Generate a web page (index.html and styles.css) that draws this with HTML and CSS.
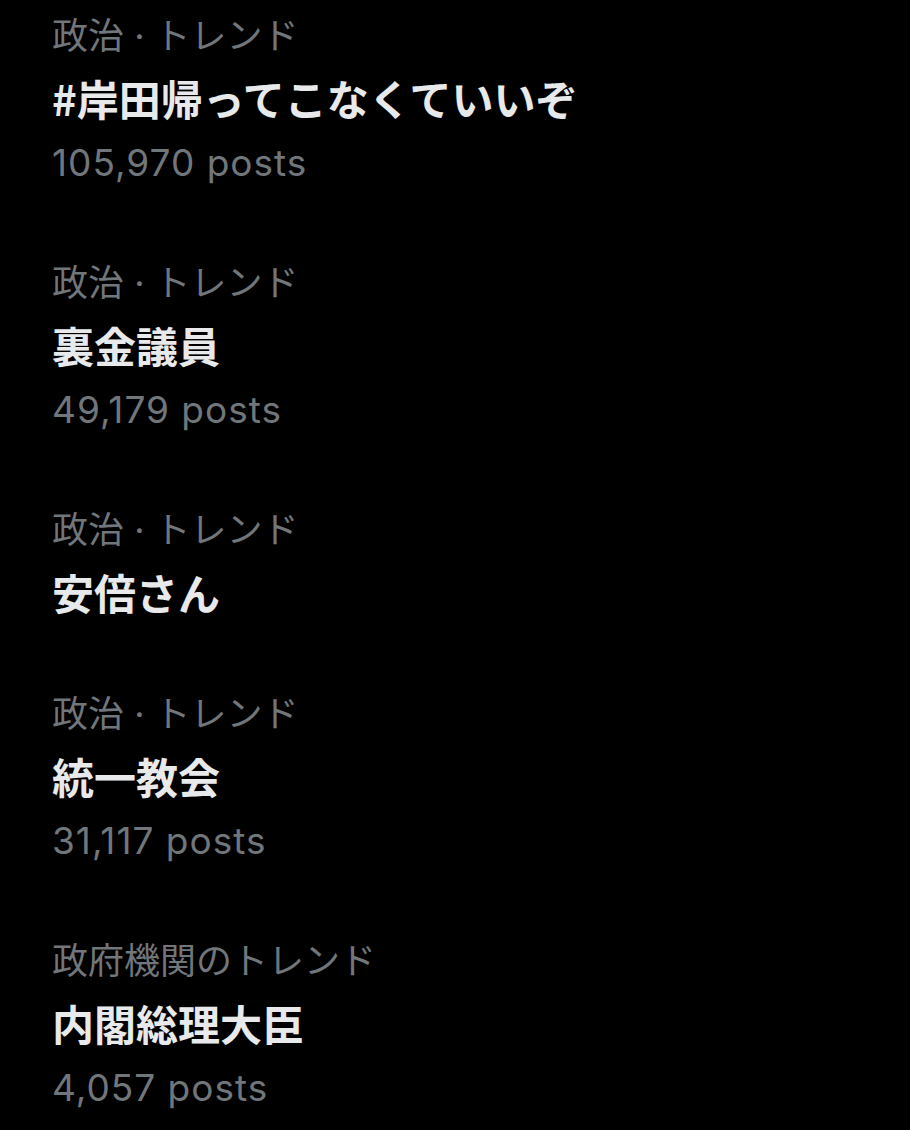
FILE: index.html
```html
<!DOCTYPE html>
<html lang="ja">
<head>
<meta charset="utf-8">
<link rel="stylesheet" href="styles.css">
</head>
<body>
<main class="list">
  <div class="trend">
    <div class="cat">政治 · トレンド</div>
    <div class="title">#岸田帰ってこなくていいぞ</div>
    <div class="count">105,970 posts</div>
  </div>
  <div class="trend">
    <div class="cat">政治 · トレンド</div>
    <div class="title">裏金議員</div>
    <div class="count">49,179 posts</div>
  </div>
  <div class="trend">
    <div class="cat">政治 · トレンド</div>
    <div class="title">安倍さん</div>
  </div>
  <div class="trend">
    <div class="cat">政治 · トレンド</div>
    <div class="title">統一教会</div>
    <div class="count">31,117 posts</div>
  </div>
  <div class="trend">
    <div class="cat">政府機関のトレンド</div>
    <div class="title">内閣総理大臣</div>
    <div class="count">4,057 posts</div>
  </div>
</main>
</body>
</html>
```
FILE: styles.css
```css
html, body {
  margin: 0;
  background: #000;
}
body {
  width: 910px;
  height: 1130px;
  overflow: hidden;
  font-family: "Noto Sans CJK JP", "Inter", sans-serif;
}
.list {
  padding: 6px 0 0 52px;
}
.trend {
  display: flex;
  flex-direction: column;
  padding-bottom: 60px;
}
.cat {
  font-family: "Inter", "Noto Sans CJK JP", sans-serif;
  font-size: 36px;
  line-height: 60px;
  color: #71767b;
  font-weight: 400;
}
.title {
  font-size: 42px;
  line-height: 64px;
  color: #e7e9ea;
  font-weight: 700;
}
.count {
  font-family: "Inter", "Noto Sans CJK JP", sans-serif;
  font-size: 37px;
  letter-spacing: 1px;
  line-height: 60px;
  margin-top: 3px;
  color: #71767b;
}
```
